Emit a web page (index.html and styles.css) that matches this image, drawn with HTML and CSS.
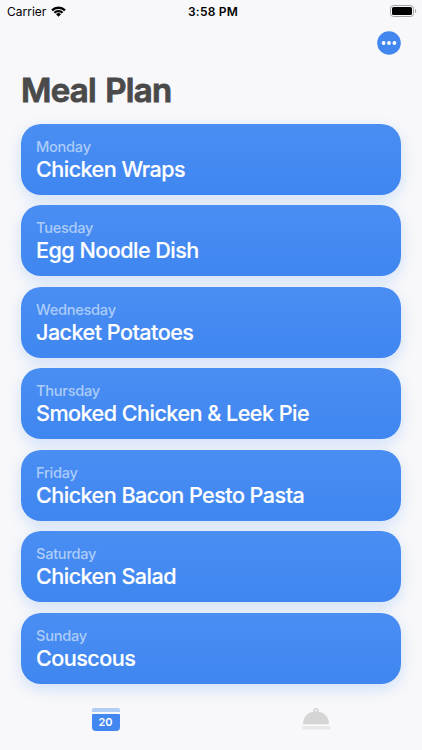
FILE: index.html
```html
<!DOCTYPE html>
<html lang="en">

<head>
    <meta charset="UTF-8">
    <meta name="viewport" content="width=device-width, initial-scale=1.0">
    <title>Meal Plan</title>
    <link rel="stylesheet" href="styles.css">
</head>

<body>
    <div class="app">
        <div class="status-bar">
            <div class="status-left">
                <span class="carrier">Carrier</span>
                <svg class="wifi" width="15" height="11" viewBox="0 0 15 11">
                    <path d="M0.2 3.6a10.4 10.4 0 0 1 14.6 0l-1.6 1.6a8.2 8.2 0 0 0-11.4 0z"></path>
                    <path d="M2.6 6a7 7 0 0 1 9.8 0l-1.6 1.6a4.7 4.7 0 0 0-6.6 0z"></path>
                    <path d="M5 8.3a3.6 3.6 0 0 1 5 0L7.5 10.8z"></path>
                </svg>
            </div>
            <span class="time">3:58 PM</span>
            <div class="status-right">
                <svg width="27" height="12" viewBox="0 0 27 12">
                    <rect x="0.5" y="0.5" width="23" height="11" rx="3" fill="none" stroke="#a2a2a4"></rect>
                    <rect x="2" y="2" width="20" height="8" rx="1.6"></rect>
                    <path d="M25 4v4a2.2 2.2 0 0 0 0-4z" fill="#a2a2a4"></path>
                </svg>
            </div>
        </div>

        <header class="header">
            <button class="more-button" aria-label="More">
                <svg width="24" height="24" viewBox="0 0 24 24">
                    <circle cx="12" cy="12" r="11.8" fill="#4287f0"></circle>
                    <circle cx="6.6" cy="12" r="1.9" fill="#fff"></circle>
                    <circle cx="12" cy="12" r="1.9" fill="#fff"></circle>
                    <circle cx="17.4" cy="12" r="1.9" fill="#fff"></circle>
                </svg>
            </button>
            <h1 class="title">Meal Plan</h1>
        </header>

        <main class="meals">
            <div class="meal-card">
                <span class="day">Monday</span>
                <span class="meal">Chicken Wraps</span>
            </div>
            <div class="meal-card">
                <span class="day">Tuesday</span>
                <span class="meal">Egg Noodle Dish</span>
            </div>
            <div class="meal-card">
                <span class="day">Wednesday</span>
                <span class="meal">Jacket Potatoes</span>
            </div>
            <div class="meal-card">
                <span class="day">Thursday</span>
                <span class="meal">Smoked Chicken &amp; Leek Pie</span>
            </div>
            <div class="meal-card">
                <span class="day">Friday</span>
                <span class="meal">Chicken Bacon Pesto Pasta</span>
            </div>
            <div class="meal-card">
                <span class="day">Saturday</span>
                <span class="meal">Chicken Salad</span>
            </div>
            <div class="meal-card">
                <span class="day">Sunday</span>
                <span class="meal">Couscous</span>
            </div>
        </main>

        <nav class="tab-bar">
            <div class="tab">
                <div class="calendar">
                    <div class="calendar-top"></div>
                    <div class="calendar-date">20</div>
                </div>
            </div>
            <div class="tab">
                <svg class="dish" width="30" height="23" viewBox="0 0 30 23">
                    <circle cx="14" cy="2.6" r="1.9" fill="none" stroke="#d3d3d4" stroke-width="1.6"></circle>
                    <path d="M1 16.2C1 8 7 3.6 14 3.6S27 8 27 16.2z" fill="#d5d5d6"></path>
                    <rect x="0" y="18" width="28.4" height="3.4" rx="1.6" fill="#e7e7e8"></rect>
                </svg>
            </div>
        </nav>
    </div>
</body>

</html>
```
FILE: styles.css
```css
* {
    box-sizing: border-box;
}

body {
    margin: 0;
    background-color: #f8f8fa;
    font-family: Inter, "Liberation Sans", sans-serif;
}

.app {
    display: flex;
    flex-direction: column;
    width: 422px;
    height: 750px;
    overflow: hidden;
}

/* Status bar */

.status-bar {
    display: grid;
    grid-template-columns: 1fr auto 1fr;
    align-items: center;
    height: 22px;
    padding: 0 5px 0 7px;
    color: #000;
    font-size: 12px;
}

.status-left {
    display: flex;
    align-items: center;
    gap: 5px;
}

.time {
    padding-left: 2px;
    font-weight: 600;
    letter-spacing: 0.2px;
}

.status-right {
    display: flex;
    justify-content: flex-end;
}

/* Header */

.header {
    display: flex;
    flex-direction: column;
    height: 101.5px;
    padding: 9px 21px 0;
}

.more-button {
    align-self: flex-end;
    width: 24px;
    height: 24px;
    padding: 0;
    background-color: transparent;
    border: none;
    cursor: pointer;
}

.more-button svg {
    display: block;
}

.title {
    margin: 15px 0 0;
    color: #4a4a4b;
    font-size: 33px;
    font-weight: 600;
    line-height: 40px;
    letter-spacing: -0.7px;
    word-spacing: 1.5px;
    -webkit-text-stroke: 0.9px #4a4a4b;
}

/* Meal list */

.meals {
    display: flex;
    flex-direction: column;
    gap: 10.5px;
    padding: 0 21px;
}

.meal-card {
    display: flex;
    flex-direction: column;
    height: 71px;
    padding: 13px 15px 0;
    border-radius: 20px;
    background: linear-gradient(#4a8ef3, #3f86f0);
    box-shadow: 0 5px 15px rgba(66, 140, 245, 0.22);
}

.day {
    color: #acccf9;
    font-size: 14.6px;
    font-weight: 500;
    line-height: 20px;
    letter-spacing: -0.27px;
}

.meal {
    color: #fff;
    font-size: 21.6px;
    font-weight: 500;
    line-height: 25px;
    letter-spacing: -0.54px;
    white-space: nowrap;
    -webkit-text-stroke: 0.15px #fff;
}

/* Tab bar */

.tab-bar {
    display: flex;
    padding-top: 24px;
}

.tab {
    display: flex;
    flex: 1;
    justify-content: center;
}

.calendar {
    width: 28px;
}

.calendar-top {
    height: 4px;
    margin-bottom: 2px;
    border-radius: 2px 2px 0 0;
    background-color: #b3cef6;
}

.calendar-date {
    height: 17px;
    border-radius: 1px 1px 4px 4px;
    background-color: #4287f0;
    color: #fff;
    font-size: 11px;
    font-weight: 600;
    line-height: 17px;
    text-align: center;
}
```
